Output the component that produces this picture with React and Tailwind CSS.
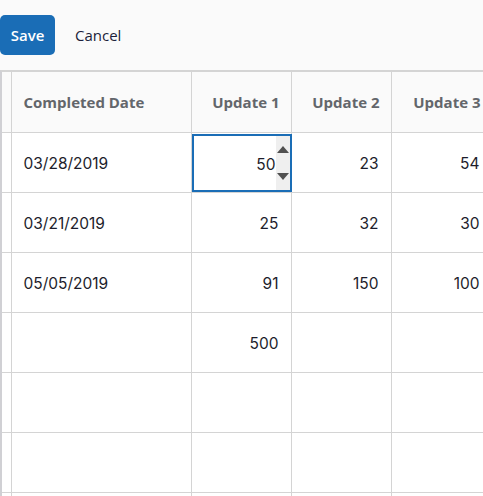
import React, { useState } from 'react'

const rows = [
    { date: '03/28/2019', u1: '50', u2: '23', u3: '54' },
    { date: '03/21/2019', u1: '25', u2: '32', u3: '30' },
    { date: '05/05/2019', u1: '91', u2: '150', u3: '100' },
    { date: '', u1: '500', u2: '', u3: '' },
    { date: '', u1: '', u2: '', u3: '' },
    { date: '', u1: '', u2: '', u3: '' },
    { date: '', u1: '', u2: '', u3: '' },
]

const cell = "h-[60px] border-r border-b border-[#d4d4d4] px-3 pt-1 text-[15.5px] text-[#1d1d2b]"
const head = "h-[60px] border-r border-b border-[#d4d4d4] pl-3 pr-[11px] text-[15px] font-bold text-[#63666b] whitespace-nowrap"

const App = () => {
    const [value, setValue] = useState('50');

    return (
        <div className="w-[483px] h-[496px] overflow-hidden bg-white" style={{ fontFamily: '"Open Sans", sans-serif' }}>
            {/* toolbar */}
            <div className="h-[70px] bg-[#fafafa] flex items-center gap-5">
                <button className="h-[40px] w-[55px] rounded-[5px] bg-[#1a6db6] text-white text-[15px] font-semibold">Save</button>
                <button className="text-[15px] text-[#1c1f3a]">Cancel</button>
            </div>

            <div className="border-t-2 border-[#d4d4d4] border-l-2 border-l-[#d0d0d4]">
                <table className="table-fixed border-collapse w-[490px]" style={{ fontFamily: 'Inter, sans-serif' }}>
                    <colgroup>
                        <col className="w-[9px]" />
                        <col className="w-[180px]" />
                        <col className="w-[100px]" />
                        <col className="w-[100px]" />
                        <col className="w-[101px]" />
                    </colgroup>
                    <thead>
                        <tr className="bg-[#fafafa]" style={{ fontFamily: '"Open Sans", sans-serif' }}>
                            <th className="h-[60px] border-r border-b border-[#d4d4d4]"></th>
                            <th className={`${head} text-left`}>Completed Date</th>
                            <th className={`${head} text-right`}>Update 1</th>
                            <th className={`${head} text-right`}>Update 2</th>
                            <th className={`${head} text-right`}>Update 3</th>
                        </tr>
                    </thead>
                    <tbody>
                        {rows.map((r, i) => (
                            <tr key={i}>
                                <td className="h-[60px] border-r border-b border-[#d4d4d4]"></td>
                                <td className={`${cell} text-left`}>{r.date}</td>
                                {i === 0 ? (
                                    <td className="h-[60px] border-r border-b border-[#d4d4d4] p-0 relative">
                                        {/* active cell editor */}
                                        <div className="absolute left-0 top-[1px] w-[100px] h-[58px] border-2 border-[#1a6db6] flex">
                                            <input
                                                value={value}
                                                onChange={(e) => setValue(e.target.value)}
                                                className="flex-1 min-w-0 text-right text-[15.5px] text-[#1d1d2b] outline-none pr-0 pt-1 bg-white"
                                                style={{ fontFamily: 'Inter, sans-serif' }}
                                            />
                                            <div className="w-[14px] bg-[#efefef] flex flex-col justify-between items-center py-[10px]">
                                                <svg width="12" height="7" viewBox="0 0 12 7"><path d="M6 0 L12 7 L0 7 Z" fill="#505050" /></svg>
                                                <svg width="12" height="7" viewBox="0 0 12 7"><path d="M0 0 L12 0 L6 7 Z" fill="#505050" /></svg>
                                            </div>
                                        </div>
                                    </td>
                                ) : (
                                    <td className={`${cell} text-right`}>{r.u1}</td>
                                )}
                                <td className={`${cell} text-right`}>{r.u2}</td>
                                <td className={`${cell} text-right`}>{r.u3}</td>
                            </tr>
                        ))}
                    </tbody>
                </table>
            </div>
        </div>
    );
};

export default App;
